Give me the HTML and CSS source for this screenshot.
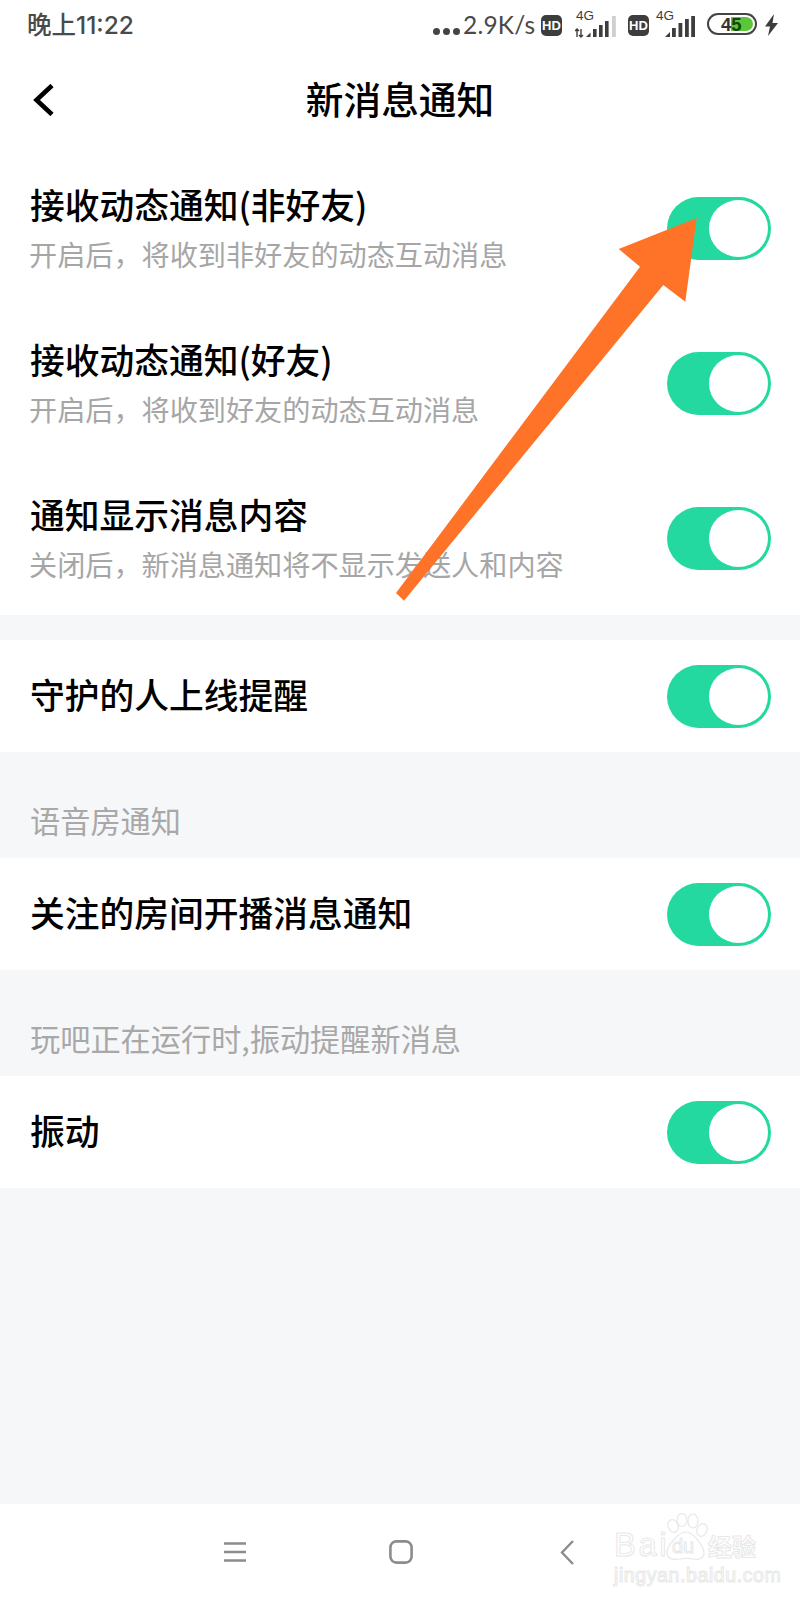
FILE: index.html
```html
<!DOCTYPE html>
<html lang="zh-CN">
<head>
<meta charset="utf-8">
<title>新消息通知</title>
<link rel="stylesheet" href="styles.css">
</head>
<body>
<div class="page">
  <div class="status">
    <span class="time">晚上11:22</span>
    <span class="dots"><i></i><i></i><i></i></span>
    <span class="speed">2.9K/s</span>
    <svg class="hd hd1" viewBox="0 0 21 21"><rect width="21" height="21" rx="5" fill="#3d3d3d"/><text x="10.5" y="15.2" text-anchor="middle" class="hd-t">HD</text></svg>
    <svg class="sig sig1" viewBox="0 0 42 30"><text x="1" y="12" class="g-t">4G</text><path d="M2 21v8M0 23l2-2 2 2M6 29v-8M4 27l2 2 2-2" fill="none" stroke="#3d3d3d" stroke-width="1.4"/><path d="M11 29l4.5-4.5V29z" fill="#3d3d3d"/><rect x="18" y="21" width="3.6" height="8" fill="#3d3d3d"/><rect x="24" y="17" width="3.6" height="12" fill="#3d3d3d"/><rect x="30" y="13" width="3.6" height="16" fill="#3d3d3d"/><rect x="37" y="8" width="3.8" height="21" fill="#cfcfcf"/></svg>
    <svg class="hd hd2" viewBox="0 0 21 21"><rect width="21" height="21" rx="5" fill="#3d3d3d"/><text x="10.5" y="15.2" text-anchor="middle" class="hd-t">HD</text></svg>
    <svg class="sig sig2" viewBox="0 0 39 30"><text x="0" y="12" class="g-t">4G</text><path d="M9 29l5-5v5z" fill="#3d3d3d"/><rect x="16" y="20" width="3.8" height="9" fill="#3d3d3d"/><rect x="22.5" y="15" width="3.8" height="14" fill="#3d3d3d"/><rect x="29" y="11" width="3.8" height="18" fill="#3d3d3d"/><rect x="35.2" y="8" width="3.8" height="21" fill="#3d3d3d"/></svg>
    <svg class="batt" viewBox="0 0 50 22"><rect x="1" y="1" width="48" height="20" rx="10" fill="#fff" stroke="#444" stroke-width="2"/><path d="M24 4h15a7 7 0 0 1 0 14H24z" fill="#5cc63a"/><text x="14" y="17.8" class="batt-t">4<tspan class="batt-5">5</tspan></text></svg>
    <svg class="bolt" viewBox="0 0 13 22"><path d="M9 0L0 12.5h5L3 22l10-13H7.5z" fill="#3d3d3d"/></svg>
  </div>

  <div class="head">
    <svg class="chev" viewBox="0 0 22 32"><path d="M20 1.5L4.5 16 20 30.5" fill="none" stroke="#000" stroke-width="4.6"/></svg>
    <h1 class="head-t">新消息通知</h1>
  </div>

  <section class="group">
    <div class="row tall">
      <div class="txt"><div class="t">接收动态通知(非好友)</div><div class="s">开启后，将收到非好友的动态互动消息</div></div>
      <div class="tog"><span class="knob"></span></div>
    </div>
    <div class="row tall">
      <div class="txt"><div class="t">接收动态通知(好友)</div><div class="s">开启后，将收到好友的动态互动消息</div></div>
      <div class="tog"><span class="knob"></span></div>
    </div>
    <div class="row tall">
      <div class="txt"><div class="t">通知显示消息内容</div><div class="s">关闭后，新消息通知将不显示发送人和内容</div></div>
      <div class="tog"><span class="knob"></span></div>
    </div>
  </section>

  <div class="gap"></div>
  <section class="group">
    <div class="row"><div class="t">守护的人上线提醒</div><div class="tog"><span class="knob"></span></div></div>
  </section>

  <div class="label">语音房通知</div>
  <section class="group">
    <div class="row"><div class="t">关注的房间开播消息通知</div><div class="tog"><span class="knob"></span></div></div>
  </section>

  <div class="label">玩吧正在运行时,振动提醒新消息</div>
  <section class="group">
    <div class="row"><div class="t">振动</div><div class="tog"><span class="knob"></span></div></div>
  </section>

  <div class="fill"></div>

  <nav class="nav">
    <svg class="n-menu" viewBox="0 0 22 20"><path d="M0 1.5h22M0 10h22M0 18.5h22" stroke="#8c8c8c" stroke-width="2.4"/></svg>
    <svg class="n-home" viewBox="0 0 24 24"><rect x="1.4" y="1.4" width="21.2" height="21.2" rx="6" fill="none" stroke="#8c8c8c" stroke-width="2.6"/></svg>
    <svg class="n-back" viewBox="0 0 14 25"><path d="M13 1L2 12.5 13 24" fill="none" stroke="#8c8c8c" stroke-width="2.4"/></svg>
  </nav>

  <div class="mark">
    <div class="mark-top">
      <span class="bai">Bai</span>
      <span class="paw">
        <svg viewBox="0 0 44 48"><g fill="#fff" stroke="#e8e8e8" stroke-width="1.2"><ellipse cx="9" cy="13" rx="5" ry="6.5" transform="rotate(-25 9 13)"/><ellipse cx="18" cy="7" rx="5" ry="6.5"/><ellipse cx="29" cy="8" rx="5" ry="7"/><ellipse cx="38" cy="17" rx="5" ry="6.5" transform="rotate(25 38 17)"/><path d="M22 19c7 0 18 14 18 21 0 6-6 7-11 6-5-1-8-1-13 0-6 1-13 0-13-6 0-8 12-21 19-21z"/></g></svg>
        <span class="du">du</span>
      </span>
      <span class="jy">经验</span>
    </div>
    <div class="mark-url">jingyan.baidu.com</div>
  </div>

  <svg class="arrow" viewBox="390 210 312 396"><polygon points="696.7,218 618.7,249 640,266.7 396,593 404,600.7 663.3,285 685.3,301.7" fill="#ff7328"/></svg>
</div>
</body>
</html>
```

FILE: styles.css
```css
* { box-sizing: border-box; }
html, body { margin: 0; padding: 0; }
body { font-family: "Noto Sans CJK SC", "Liberation Sans", sans-serif; background: #fff; }

.page {
  position: relative;
  width: 800px;
  height: 1600px;
  display: flex;
  flex-direction: column;
  background: #f6f7f9;
  overflow: hidden;
}

/* status bar */
.status {
  height: 50px;
  flex: none;
  display: flex;
  align-items: center;
  padding-left: 27px;
  background: #fff;
  color: #444;
}
.time { font-family: "Inter", "Noto Sans CJK SC", sans-serif; font-size: 24.5px; font-weight: 500; line-height: 50px; color: #4a4a4a; }
.dots { margin-left: auto; display: flex; gap: 3px; margin-top: 12px; width: 27px; }
.dots i { width: 7px; height: 7px; border-radius: 50%; background: #444; display: block; }
.speed { font-family: "Lato", "Liberation Sans", sans-serif; font-size: 24.5px; letter-spacing: 0.2px; width: 78px; margin-left: 3px; line-height: 50px; color: #4a4a4a; }
.hd { width: 21px; height: 21px; flex: none; }
.hd-t { font: 700 13px "Liberation Sans", sans-serif; fill: #fff; }
.g-t { font: 400 13.5px "Liberation Sans", sans-serif; fill: #3d3d3d; }
.sig { height: 30px; flex: none; margin-top: -4px; }
.sig1 { width: 42px; margin-left: 13px; }
.hd2 { margin-left: 11px; }
.sig2 { width: 39px; margin-left: 7px; }
.batt { width: 50px; height: 22px; flex: none; margin-left: 12px; margin-top: -2px; }
.batt-t { font: 700 18.5px "Liberation Sans", sans-serif; fill: #333; }
.batt-5 { fill: #14450c; }
.bolt { width: 13px; height: 22px; flex: none; margin-left: 8px; margin-right: 22px; }

/* header */
.head {
  position: relative;
  height: 100px;
  flex: none;
  display: flex;
  align-items: center;
  justify-content: center;
  padding-bottom: 4px;
  background: #fff;
}
.chev { position: absolute; left: 32px; top: 34px; width: 22px; height: 32px; }
.head-t { margin: 0; font-size: 37.7px; font-weight: 500; line-height: 96px; color: #000; }

/* rows */
.group { background: #fff; flex: none; }
.row {
  height: 112px;
  display: flex;
  align-items: center;
  justify-content: space-between;
  padding: 0 29px 0 30px;
}
.row.tall { height: 155px; }
.row.tall .tog { margin-top: 2px; }
.row > .t { padding-bottom: 4px; }
.t { font-size: 34.75px; font-weight: 500; line-height: 46px; color: #000; white-space: nowrap; }
.s { font-size: 28.15px; line-height: 40px; margin-top: 7px; margin-left: -1px; color: #a6a6a6; white-space: nowrap; }

.tog {
  width: 104px;
  height: 63px;
  flex: none;
  display: flex;
  align-items: center;
  justify-content: flex-end;
  padding-right: 3px;
  border-radius: 32px;
  background: #23d9a0;
}
.knob { width: 59px; height: 57px; border-radius: 50%; background: #fff; display: block; }

.gap { height: 25px; flex: none; }
.label {
  height: 106px;
  flex: none;
  display: flex;
  align-items: flex-end;
  padding: 0 0 18px 30px;
  font-size: 30.2px;
  line-height: 40px;
  color: #a8a8a8;
}
.fill { flex: 1; }

/* bottom navigation */
.nav {
  height: 96px;
  flex: none;
  display: grid;
  grid-template-columns: repeat(3, 166px);
  justify-content: center;
  justify-items: center;
  align-items: center;
  padding: 0 0 0 2px;
  background: #fff;
}
.n-menu { width: 22px; height: 20px; }
.n-home { width: 24px; height: 24px; }
.n-back { width: 14px; height: 25px; }

/* overlays */
.mark {
  position: absolute;
  left: 614px;
  top: 1513px;
  width: 145px;
  color: #fff;
  -webkit-text-stroke: 1px #e8e8e8;
}
.mark-top { display: flex; align-items: flex-end; height: 48px; }
.bai { font: 400 33px/32px "Liberation Sans", sans-serif; width: 53px; letter-spacing: 2.5px; }
.paw { position: relative; width: 44px; height: 48px; display: block; margin-left: -3px; }
.paw svg { width: 44px; height: 48px; display: block; }
.du { position: absolute; left: 8px; top: 22px; font: 400 20px/22px "Liberation Sans", sans-serif; }
.jy { font-size: 24px; font-weight: 700; line-height: 30px; }
.mark-url { font: 400 19.5px/22px "Liberation Sans", sans-serif; margin-top: 3px; white-space: nowrap; letter-spacing: 0.6px; }

.arrow { position: absolute; left: 390px; top: 210px; width: 312px; height: 396px; }
```
